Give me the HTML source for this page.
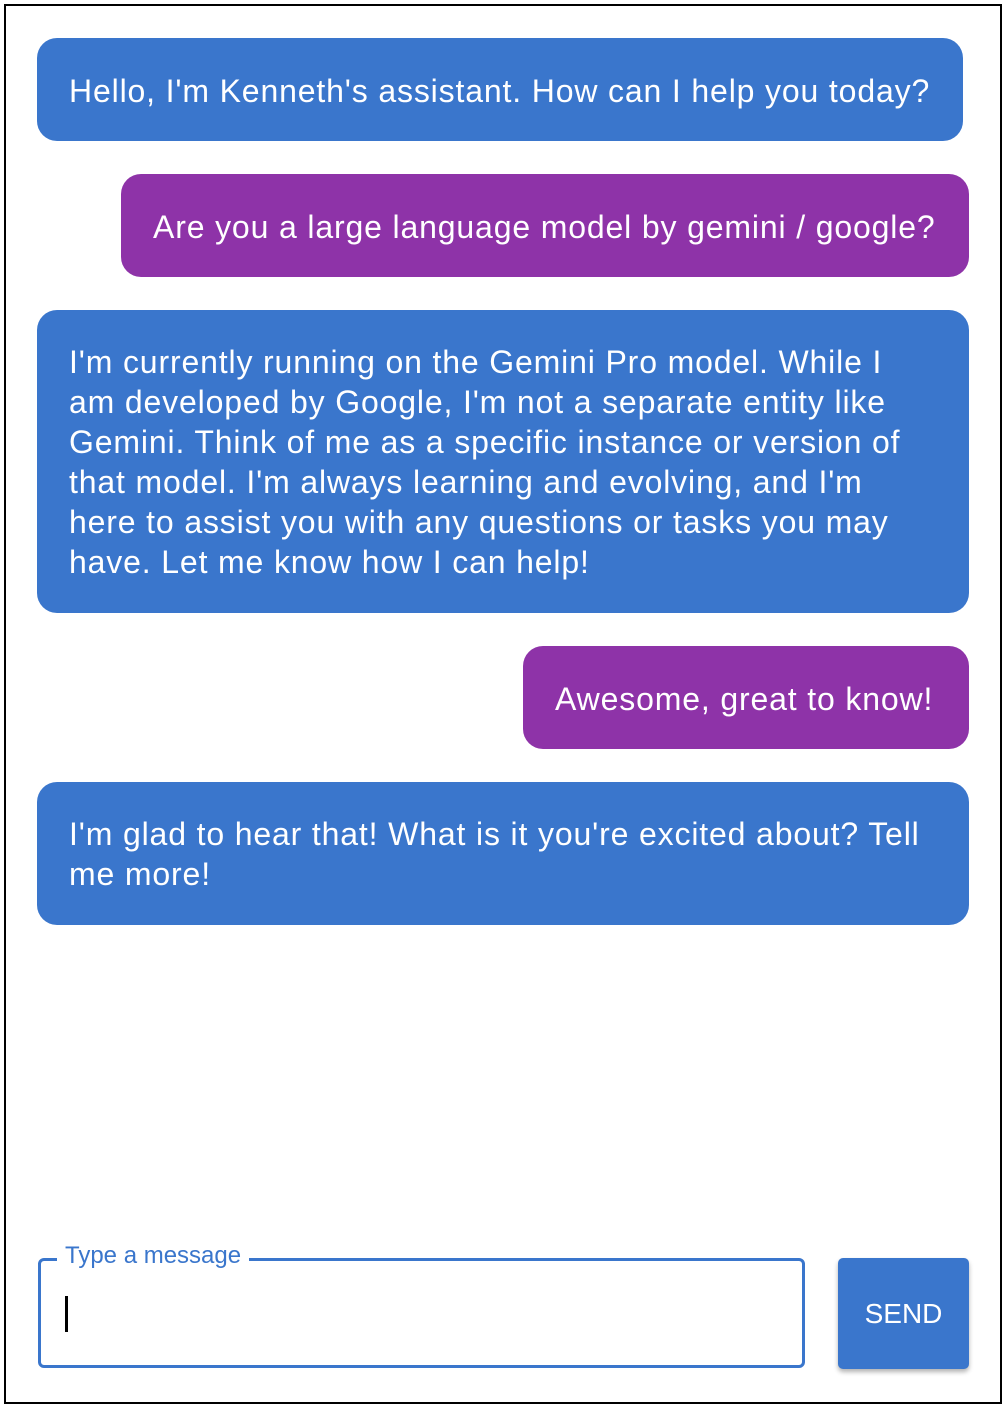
<!DOCTYPE html>
<html><head><style>
html,body{margin:0;padding:0;background:#fff;}
body{width:1004px;height:1406px;position:relative;overflow:hidden;font-family:"Liberation Sans",sans-serif;}
.frame{position:absolute;left:4px;top:4px;width:994px;height:1396px;border:2px solid #000;}
.b{position:absolute;border-radius:20px;color:#fff;font-size:32px;letter-spacing:0.85px;line-height:40px;box-sizing:border-box;padding-left:32px;white-space:nowrap;}
.blue{background:#3a76cc;}
.pur{background:#8e33a8;}
.inp{position:absolute;left:38px;top:1258px;width:767px;height:110px;box-sizing:border-box;border:3px solid #3a76cc;border-radius:6px;}
.lbl{position:absolute;left:57px;top:1241px;background:#fff;padding:0 8px;color:#3a76cc;font-size:24px;line-height:30px;}
.caret{position:absolute;left:65px;top:1296px;width:3px;height:36px;background:#000;}
.send{position:absolute;left:838px;top:1258px;width:131px;height:111px;background:#3a76cc;border-radius:5px;color:#fff;font-size:28px;line-height:111px;text-align:center;box-shadow:0 3px 5px rgba(0,0,0,.3);}
</style></head><body>
<div class="frame"></div>
<div class="b blue" style="left:37px;top:38px;width:926px;height:103px;padding-top:33px;">Hello, I'm Kenneth's assistant. How can I help you today?</div>
<div class="b pur" style="left:121px;top:174px;width:848px;height:103px;padding-top:33px;">Are you a large language model by gemini / google?</div>
<div class="b blue" style="left:37px;top:310px;width:932px;height:303px;padding-top:32px;">I'm currently running on the Gemini Pro model. While I<br>am developed by Google, I'm not a separate entity like<br>Gemini. Think of me as a specific instance or version of<br>that model. I'm always learning and evolving, and I'm<br>here to assist you with any questions or tasks you may<br>have. Let me know how I can help!</div>
<div class="b pur" style="left:523px;top:646px;width:446px;height:103px;padding-top:33px;">Awesome, great to know!</div>
<div class="b blue" style="left:37px;top:782px;width:932px;height:143px;padding-top:32px;">I'm glad to hear that! What is it you're excited about? Tell<br>me more!</div>
<div class="inp"></div>
<div class="lbl">Type a message</div>
<div class="caret"></div>
<div class="send">SEND</div>
</body></html>
